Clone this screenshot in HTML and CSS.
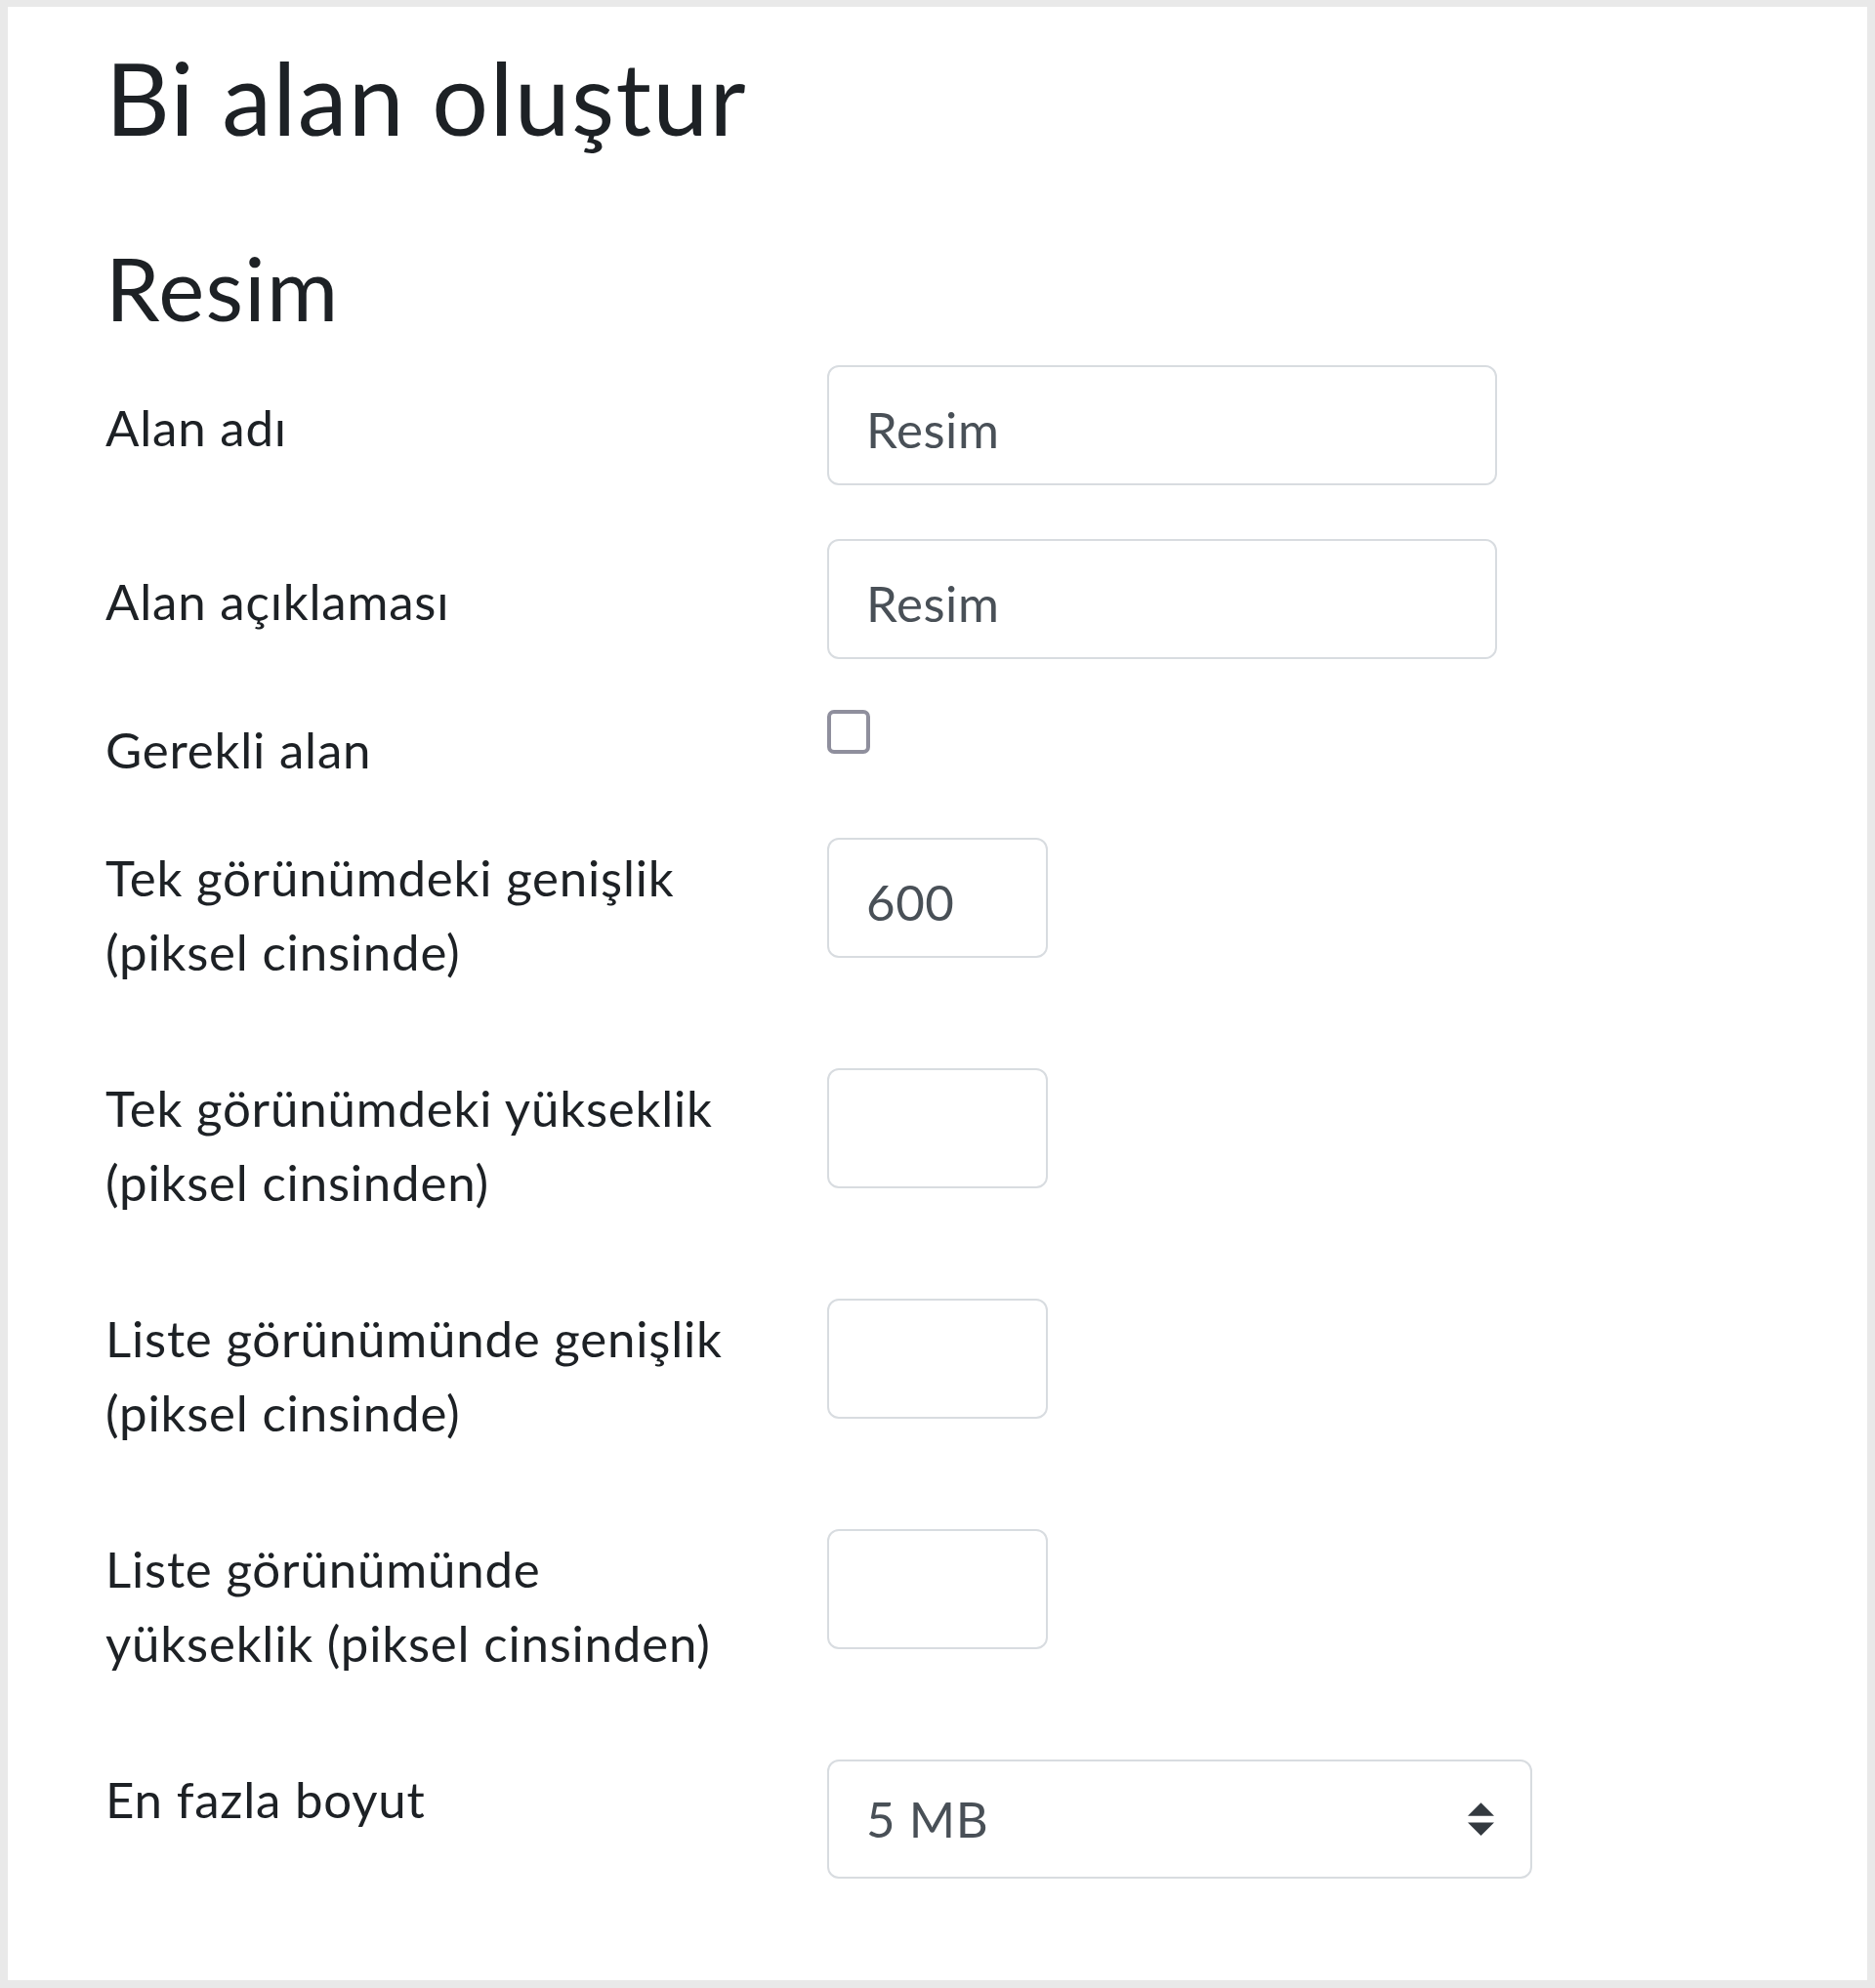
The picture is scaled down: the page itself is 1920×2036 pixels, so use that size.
FILE: index.html
```html
<!DOCTYPE html>
<html lang="tr">
  <head>
    <meta charset="UTF-8" />
    <meta name="viewport" content="width=device-width, initial-scale=1.0" />
    <title>Bi alan oluştur</title>
    <link rel="stylesheet" href="styles.css">
  </head>
  <body>
    <div class="page">
      <h2 class="title">Bi alan oluştur</h2>
      <form class="field-form">
        <h3 class="section-title">Resim</h3>

        <div class="fitem">
          <label class="flabel padded" for="fname">Alan adı</label>
          <div class="fcontrol">
            <input id="fname" class="form-control wide" type="text" value="Resim">
          </div>
        </div>

        <div class="fitem">
          <label class="flabel padded" for="fdesc">Alan açıklaması</label>
          <div class="fcontrol">
            <input id="fdesc" class="form-control wide" type="text" value="Resim">
          </div>
        </div>

        <div class="fitem check">
          <label class="flabel" for="freq">Gerekli alan</label>
          <div class="fcontrol">
            <input id="freq" class="checkbox" type="checkbox">
          </div>
        </div>

        <div class="fitem multi">
          <label class="flabel" for="fwidth">Tek görünümdeki genişlik<br>(piksel cinsinde)</label>
          <div class="fcontrol">
            <input id="fwidth" class="form-control short" type="text" value="600">
          </div>
        </div>

        <div class="fitem multi">
          <label class="flabel" for="fheight">Tek görünümdeki yükseklik<br>(piksel cinsinden)</label>
          <div class="fcontrol">
            <input id="fheight" class="form-control short" type="text" value="">
          </div>
        </div>

        <div class="fitem multi">
          <label class="flabel" for="flwidth">Liste görünümünde genişlik<br>(piksel cinsinde)</label>
          <div class="fcontrol">
            <input id="flwidth" class="form-control short" type="text" value="">
          </div>
        </div>

        <div class="fitem multi">
          <label class="flabel" for="flheight">Liste görünümünde<br>yükseklik (piksel cinsinden)</label>
          <div class="fcontrol">
            <input id="flheight" class="form-control short" type="text" value="">
          </div>
        </div>

        <div class="fitem">
          <label class="flabel" for="fsize">En fazla boyut</label>
          <div class="fcontrol">
            <div class="select-wrap">
              <select id="fsize" class="custom-select">
                <option>5 MB</option>
              </select>
              <svg class="select-arrow" viewBox="0 0 4 5" width="27" height="34">
                <path d="M2 0L0 2h4zm0 5L0 3h4z" fill="#343a40"/>
              </svg>
            </div>
          </div>
        </div>
      </form>
    </div>
  </body>
</html>
```

FILE: styles.css
```css
html {
  height: 100%;
}
body {
  font-family: Lato, "Open Sans", sans-serif;
  color: #1d2125;
  background-color: #e9e9e9;
  margin: 0;
  padding: 7px 8px 8px 8px;
  min-height: 100%;
  box-sizing: border-box;
  display: flex;
  flex-direction: column;
}
.page {
  flex: 1;
  background-color: #fff;
  padding: 32px 0 0 100px;
}
.title {
  font-size: 102px;
  font-weight: 400;
  line-height: 1.2;
  letter-spacing: 1.3px;
  margin: 0 0 81px 0;
}
.section-title {
  font-size: 89px;
  font-weight: 400;
  line-height: 1.2;
  letter-spacing: 1.3px;
  margin: 0 0 25px 0;
}
.field-form {
  margin: 0;
}
.fitem {
  display: grid;
  grid-template-columns: 739px 1fr;
  align-items: start;
  margin-bottom: 55px;
}
.fitem.check {
  margin-bottom: 51px;
}
.fitem.multi {
  min-height: 181px;
}
.flabel {
  font-size: 51px;
  line-height: 1.5;
  letter-spacing: 0.8px;
  padding-top: 3px;
}
.fitem.check .flabel {
  padding-top: 0;
}
.flabel.padded {
  padding-top: 26px;
}
.form-control,
.custom-select {
  font-family: Lato, "Open Sans", sans-serif;
  font-size: 51px;
  letter-spacing: 0.6px;
  color: #495057;
  background-color: #fff;
  height: 123px;
  box-sizing: border-box;
  border: 2px solid #d8dce0;
  border-radius: 12px;
  padding: 8px 38px 0 38px;
  margin: 0;
  display: block;
  outline: none;
}
.form-control.wide {
  width: 686px;
}
.form-control.short {
  width: 226px;
}
.checkbox {
  appearance: none;
  -webkit-appearance: none;
  width: 44px;
  height: 45px;
  margin: -3px 0 0 0;
  box-sizing: border-box;
  border: 4px solid #8f8f9d;
  border-radius: 7px;
  background-color: #fff;
  display: block;
}
.select-wrap {
  position: relative;
  width: 722px;
}
.custom-select {
  appearance: none;
  -webkit-appearance: none;
  width: 100%;
  height: 122px;
  padding: 0 80px 0 38px;
}
.select-arrow {
  position: absolute;
  right: 39px;
  top: 44px;
  pointer-events: none;
}
```
